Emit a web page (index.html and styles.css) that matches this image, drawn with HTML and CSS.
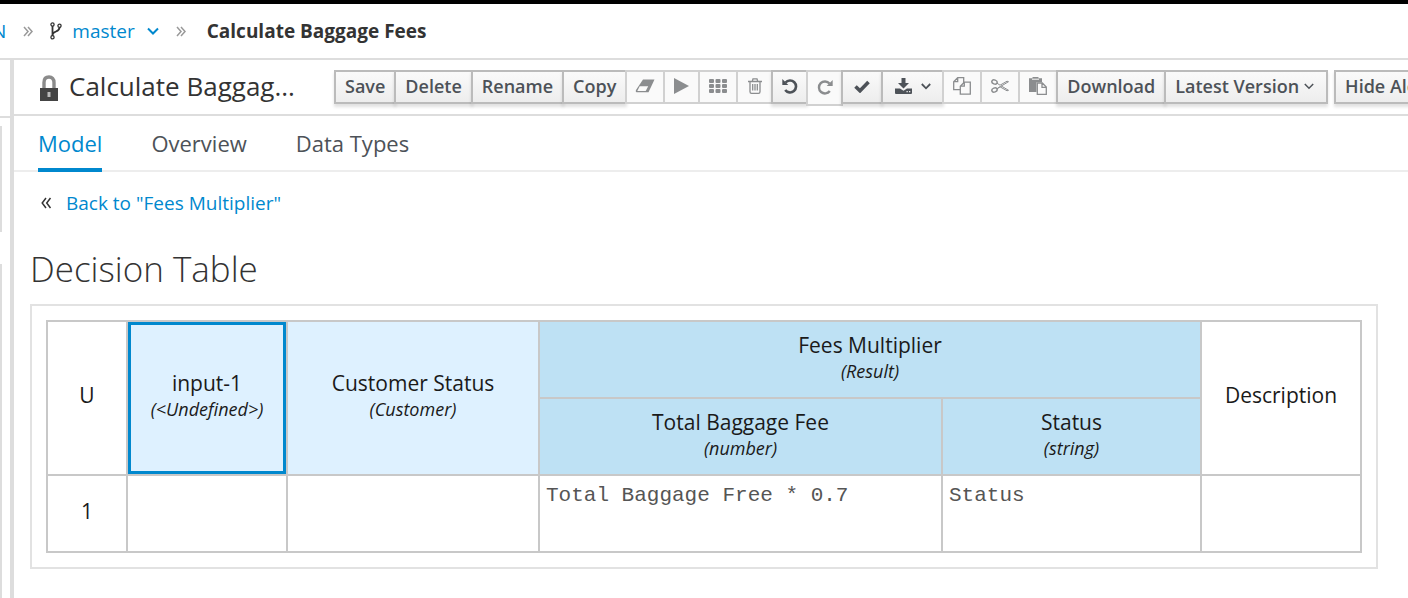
FILE: index.html
```html
<!DOCTYPE html>
<html lang="en">
<head>
    <meta charset="UTF-8">
    <meta name="viewport" content="width=device-width, initial-scale=1.0">
    <title>Calculate Baggage Fees</title>
    <link rel="stylesheet" href="styles.css">
</head>
<body>
    <!-- Breadcrumbs -->
    <nav class="breadcrumbs" aria-label="Breadcrumb">
        <a href="#" class="crumb-space">N</a>
        <svg class="crumb-sep" width="10" height="11" viewBox="0 0 10 11"><path d="M1 1l4 4.500-4 4.500M5 1l4 4.500-4 4.500"/></svg>
        <span class="crumb-branch">
            <svg width="12" height="18" viewBox="0 0 12 18" fill="none" stroke="#333" stroke-width="1.300"><circle cx="2.500" cy="2.500" r="1.600"/><circle cx="2.500" cy="15.300" r="1.600"/><circle cx="9.500" cy="3.800" r="1.600"/><path d="M2.500 4v10M9.500 5.500c0 5-6.500 3-7 7.500" stroke-width="1.800"/></svg>
            <a href="#">master</a>
            <svg class="crumb-caret" width="12" height="8" viewBox="0 0 12 8"><path d="M1 1.500l5 5 5-5"/></svg>
        </span>
        <svg class="crumb-sep" width="10" height="11" viewBox="0 0 10 11"><path d="M1 1l4 4.500-4 4.500M5 1l4 4.500-4 4.500"/></svg>
        <strong class="crumb-current">Calculate Baggage Fees</strong>
    </nav>

    <div class="workbench">
        <!-- Collapsed side panel -->
        <aside class="side">
            <div class="side-head"></div>
            <div class="side-card side-card-small"></div>
            <div class="side-card side-card-rest"></div>
        </aside>

        <main class="editor">
            <header class="editor-head">
                <h1 class="editor-title">
                    <svg width="18" height="26" viewBox="0 0 18 26"><path d="M4 14V7.500C4 4 6 2 9 2s5 2 5 5.500V14" fill="none" stroke="#8b8b8b" stroke-width="3.400"/><path d="M0 13h18v13H0z" fill="#444"/><path d="M7.500 17h3v5h-3z" fill="#bbb"/></svg>
                    <span>Calculate Baggag...</span>
                </h1>
                <div class="toolbar">
                    <button class="btn">Save</button>
                    <button class="btn">Delete</button>
                    <button class="btn">Rename</button>
                    <button class="btn">Copy</button>
                    <button class="btn btn-icon" disabled aria-label="Clear">
                        <svg width="20" height="14" viewBox="0 0 20 14"><path d="M8 .5h11.500l-6 12.800H2.500Q0 13.300 1 11z" fill="#8b8d8f"/><path d="M4.700 7.300h8.500l-2.500 4.700H2.300z" fill="#fafafa"/></svg>
                    </button>
                    <button class="btn btn-icon btn-narrow" disabled aria-label="Run">
                        <svg width="15" height="16" viewBox="0 0 15 16"><path d="M0 0l15 8-15 8z" fill="#8b8d8f"/></svg>
                    </button>
                    <button class="btn btn-icon" disabled aria-label="Grid">
                        <svg width="18" height="14" viewBox="0 0 18 14" fill="#8b8d8f"><rect width="5" height="4" rx="1"/><rect x="6.500" width="5" height="4" rx="1"/><rect x="13" width="5" height="4" rx="1"/><rect y="5" width="5" height="4" rx="1"/><rect x="6.500" y="5" width="5" height="4" rx="1"/><rect x="13" y="5" width="5" height="4" rx="1"/><rect y="10" width="5" height="4" rx="1"/><rect x="6.500" y="10" width="5" height="4" rx="1"/><rect x="13" y="10" width="5" height="4" rx="1"/></svg>
                    </button>
                    <button class="btn btn-icon btn-narrow" disabled aria-label="Delete selected">
                        <svg width="14" height="16" viewBox="0 0 14 16" fill="none" stroke="#8b8d8f" stroke-width="1.300"><path d="M0 3.500h14M4.300 3.200L5 .8h4l.7 2.400M2 3.500v10.200c0 1 .6 1.600 1.500 1.600h7c.9 0 1.500-.6 1.500-1.600V3.500M4.700 6v6.500M7 6v6.500M9.300 6v6.500"/></svg>
                    </button>
                    <button class="btn btn-icon btn-narrow" aria-label="Undo">
                        <svg width="16" height="16" viewBox="0 0 16 16"><path d="M3.500 4.500A6 6 0 1 1 3.200 12" fill="none" stroke="#4d5258" stroke-width="2.600"/><path d="M.3 1v6h6z" fill="#4d5258"/></svg>
                    </button>
                    <button class="btn btn-icon btn-narrow btn-low" disabled aria-label="Redo">
                        <svg width="16" height="16" viewBox="0 0 16 16"><path d="M12.500 4.500A6 6 0 1 0 12.800 12" fill="none" stroke="#8b8d8f" stroke-width="2.400"/><path d="M15.700 1v6h-6z" fill="#8b8d8f"/></svg>
                    </button>
                    <button class="btn btn-icon btn-wide" aria-label="Validate">
                        <svg width="16" height="13" viewBox="0 0 16 13"><path d="M1.500 6.500l4.500 4.300L14.500 2" fill="none" stroke="#4d5258" stroke-width="3.600"/></svg>
                    </button>
                    <button class="btn btn-icon btn-menu" aria-label="Export">
                        <svg width="17" height="16" viewBox="0 0 17 16" fill="#4d5258"><path d="M6.500 0h4v5H14l-5.500 5.500L3 5h3.500z"/><path d="M0 10.500h5l3.500 2.300 3.500-2.300h5V15a1 1 0 0 1-1 1H1a1 1 0 0 1-1-1z"/><path d="M11.500 13h1.300v1.300h-1.300zM14 13h1.300v1.300H14z" fill="#eee"/></svg>
                        <svg width="10" height="7" viewBox="0 0 10 7"><path d="M.8 1L5 5.300 9.200 1" fill="none" stroke="#4d5258" stroke-width="1.800"/></svg>
                    </button>
                    <button class="btn btn-icon" disabled aria-label="Copy selected">
                        <svg width="18" height="18" viewBox="0 0 18 18" fill="#fafafa" stroke="#8b8d8f" stroke-width="1.300"><path d="M4.700.7h6v12H.7v-8zM4.700.7v4h-4"/><path d="M11.300 5.200h6v12H7.300v-8zM11.300 5.200v4h-4"/></svg>
                    </button>
                    <button class="btn btn-icon" disabled aria-label="Cut selected">
                        <svg width="18" height="14" viewBox="0 0 18 14" fill="none" stroke="#8b8d8f"><ellipse cx="3.500" cy="3" rx="2.700" ry="2" stroke-width="1.500" transform="rotate(20 3.500 3)"/><ellipse cx="3.500" cy="11" rx="2.700" ry="2" stroke-width="1.500" transform="rotate(-20 3.500 11)"/><path d="M6 4.200l3 2 7-4 1.500.5L9.500 7.500 6 9.700M6 9.800l3-2 7 4 1.500-.5-7.500-4.500"/></svg>
                    </button>
                    <button class="btn btn-icon" disabled aria-label="Paste">
                        <svg width="18" height="18" viewBox="0 0 18 18"><path d="M0 1.200h3.500V0h6v1.200H13v4H7.500V15H0z" fill="#8b8d8f"/><path d="M3 2.200h7" stroke="#fafafa"/><path d="M8.300 6h5l4 4v7.300h-9zM13 6v4.300h4.300" fill="#fafafa" stroke="#8b8d8f" stroke-width="1.300"/></svg>
                    </button>
                    <button class="btn">Download</button>
                    <button class="btn btn-version">Latest Version
                        <svg width="10" height="7" viewBox="0 0 10 7"><path d="M.8 1L5 5.300 9.200 1" fill="none" stroke="#4d5258" stroke-width="1.500"/></svg>
                    </button>
                    <button class="btn btn-apart">Hide Alerts</button>
                </div>
            </header>

            <nav class="tabs" aria-label="Editor pages">
                <a href="#" class="tab active">Model</a>
                <a href="#" class="tab">Overview</a>
                <a href="#" class="tab">Data Types</a>
            </nav>

            <div class="content">
                <div class="back">
                    <svg width="11" height="12" viewBox="0 0 11 12"><path d="M5 1L1.200 6 5 11M9.500 1L5.700 6l3.800 5"/></svg>
                    <a href="#">Back to "Fees Multiplier"</a>
                </div>
                <h2 class="heading">Decision Table</h2>
                <div class="frame">
                    <table class="decision">
                        <colgroup>
                            <col class="col-num">
                            <col class="col-input">
                            <col class="col-customer">
                            <col class="col-fee">
                            <col class="col-status">
                            <col class="col-desc">
                        </colgroup>
                        <thead>
                            <tr>
                                <th rowspan="2">U</th>
                                <th rowspan="2" class="input selected">input-1<em>(&lt;Undefined&gt;)</em></th>
                                <th rowspan="2" class="input">Customer Status<em>(Customer)</em></th>
                                <th colspan="2" class="output">Fees Multiplier<em>(Result)</em></th>
                                <th rowspan="2">Description</th>
                            </tr>
                            <tr>
                                <th class="output">Total Baggage Fee<em>(number)</em></th>
                                <th class="output">Status<em>(string)</em></th>
                            </tr>
                        </thead>
                        <tbody>
                            <tr>
                                <th>1</th>
                                <td></td>
                                <td></td>
                                <td>Total Baggage Free * 0.7</td>
                                <td>Status</td>
                                <td></td>
                            </tr>
                        </tbody>
                    </table>
                </div>
            </div>
        </main>
    </div>
</body>
</html>
```
FILE: styles.css
```css
/* General */
* {
    box-sizing: border-box;
}
body {
    margin: 0;
    min-height: 100vh;
    display: flex;
    flex-direction: column;
    overflow: hidden;
    border-top: 4px solid #000;
    font-family: "Open Sans", sans-serif;
    font-size: 20px;
    color: #333;
    background: #fff;
}
a {
    color: #0088ce;
    text-decoration: none;
}
svg {
    flex-shrink: 0;
}

/* Breadcrumbs */
.breadcrumbs {
    display: flex;
    align-items: center;
    gap: 17px;
    height: 56px;
    margin-left: -8px;
    border-bottom: 2px solid #ddd;
    font-size: 19px;
}
.crumb-sep {
    fill: none;
    stroke: #999;
    stroke-width: 1.5;
}
.crumb-branch {
    display: flex;
    align-items: center;
    gap: 10px;
}
.crumb-caret {
    margin-left: 2px;
    fill: none;
    stroke: #0088ce;
    stroke-width: 2;
}
.crumb-current {
    margin-left: 4px;
}

/* Layout */
.workbench {
    flex: 1;
    display: flex;
}
.side {
    width: 14px;
    display: flex;
    flex-direction: column;
    border-right: 4px solid #ddd;
}
.side-head {
    height: 58px;
    border-bottom: 2px solid #ddd;
}
.side-card {
    width: 2px;
    background: #ddd;
}
.side-card-small {
    height: 106px;
    margin: 8px 0 32px;
}
.side-card-rest {
    flex: 1;
}
.editor {
    flex: 1;
    min-width: 0;
}

/* Title and toolbar */
.editor-head {
    display: flex;
    align-items: center;
    height: 56px;
    padding: 2px 0 0 26px;
    border-bottom: 2px solid #ddd;
}
.editor-title {
    display: flex;
    align-items: center;
    gap: 11px;
    width: 294px;
    flex-shrink: 0;
    margin: 0;
    font-size: 26px;
    font-weight: 400;
    white-space: nowrap;
}
.editor-title span {
    padding-bottom: 4px;
}
.toolbar {
    display: flex;
}
.btn {
    flex-shrink: 0;
    display: flex;
    align-items: center;
    justify-content: center;
    height: 34px;
    padding: 0 9px 2px;
    border: 2px solid #bbb;
    background: linear-gradient(#fafafa, #ededed);
    box-shadow: 0 3px 3px rgba(0, 0, 0, 0.12);
    font-family: inherit;
    font-size: 18px;
    font-weight: 600;
    color: #4d5258;
    white-space: nowrap;
}
.btn + .btn {
    margin-left: -2px;
}
.btn:disabled {
    border-color: #d1d1d1;
    background: #fafafa;
    box-shadow: none;
}
.btn-icon {
    width: 40px;
    padding: 0 0 2px;
}
.btn-narrow {
    width: 37px;
}
.btn-wide {
    width: 42px;
}
.btn-menu {
    width: 63px;
    gap: 9px;
}
.btn-low {
    height: 36px;
}
.btn-version {
    gap: 5px;
    padding-right: 12px;
}
.btn + .btn-apart {
    margin-left: 6px;
}

/* Tabs */
.tabs {
    display: flex;
    gap: 49px;
    height: 56px;
    padding-left: 24px;
    border-bottom: 2px solid #ededed;
}
.tab {
    height: 56px;
    line-height: 54px;
    font-size: 22px;
    color: #4d5258;
}
.tab.active {
    color: #0088ce;
    border-bottom: 4px solid #0088ce;
}

/* Content */
.content {
    padding: 16px 30px 30px 16px;
}
.back {
    display: flex;
    align-items: center;
    gap: 14px;
    height: 30px;
    padding-left: 11px;
    font-size: 19px;
}
.back svg {
    fill: none;
    stroke: #333;
    stroke-width: 1.5;
}
.heading {
    margin: 26px 0 10px;
    font-size: 35px;
    font-weight: 300;
    line-height: 50px;
}

/* Decision table */
.frame {
    padding: 14px;
    border: 2px solid #e2e2e2;
}
.decision {
    width: 100%;
    table-layout: fixed;
    border-collapse: collapse;
    color: #1a1a1a;
}
.decision th,
.decision td {
    height: 77px;
    padding: 0;
    border: 2px solid #c8c8c8;
}
.decision th {
    padding-bottom: 6px;
    font-size: 21px;
    font-weight: 400;
    line-height: 28px;
}
.decision em {
    display: block;
    font-size: 18px;
    line-height: 24px;
}
.decision td {
    padding: 6px;
    font-family: "Courier New", "Liberation Mono", monospace;
    font-size: 21px;
    line-height: 28px;
    vertical-align: top;
    color: #555;
}
.decision .input {
    background: #def1ff;
}
.decision .output {
    background: #bee1f4;
}
.decision .selected {
    outline: 3px solid #0088ce;
    outline-offset: -4px;
}
.col-num {
    width: 80px;
}
.col-input {
    width: 160px;
}
.col-customer {
    width: 252px;
}
.col-status {
    width: 259px;
}
.col-desc {
    width: 160px;
}
```
